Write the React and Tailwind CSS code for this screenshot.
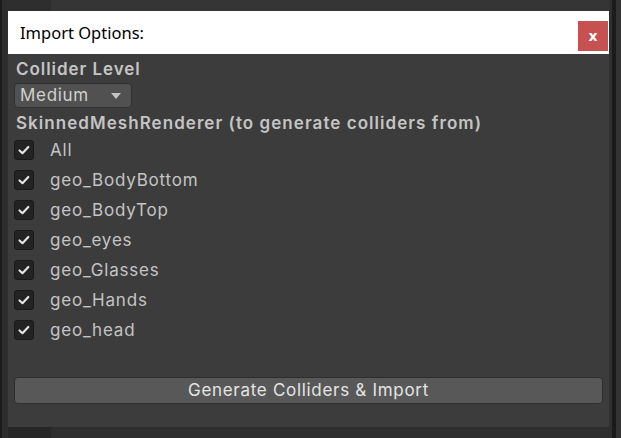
import React from "react";

const items = ["All", "geo_BodyBottom", "geo_BodyTop", "geo_eyes", "geo_Glasses", "geo_Hands", "geo_head"];

function Check() {
  return (
    <div className="w-[20px] h-[20px] rounded-[3px] bg-[#232323] border border-[#1a1a1a] flex items-center justify-center">
      <svg width="20" height="20" viewBox="0 0 20 20" className="block">
        <polyline points="5,10.5 8.3,13.6 14.8,6.6" fill="none" stroke="#e6e6e6" strokeWidth="2.3" strokeLinecap="round" strokeLinejoin="round" />
      </svg>
    </div>
  );
}

export default function App() {
  const inter = { fontFamily: "Inter, 'Noto Sans', sans-serif" };
  return (
    <div className="w-[621px] h-[438px] flex bg-[#2b2b2b] overflow-hidden" style={inter}>
      <div className="w-[8px] h-full flex">
        <div className="w-[2px] h-full bg-[#1b1b1b]" />
        <div className="w-[6px] h-full bg-[#2d2d2d]" />
      </div>
      <div className="w-[601px] h-full flex flex-col">
        <div className="h-[11px] flex">
          <div className="w-[43px] bg-[#2e2e2e]" />
          <div className="flex-1 bg-[#353535]" />
        </div>
        <div className="h-[416px] flex flex-col bg-[#3c3c3c]">
          <div className="h-[43px] bg-white flex items-start justify-between">
            <div className="pl-[12px] pt-[1px] h-full flex items-center text-[16.5px] text-black" style={{ fontFamily: "'Noto Sans', sans-serif" }}>
              Import Options:
            </div>
            <div className="mt-[10px] mr-[1px] w-[30px] h-[30px] bg-[#c75050] flex items-center justify-center text-white font-bold text-[14px] leading-none" style={{ fontFamily: "'DejaVu Sans', sans-serif" }}>
              x
            </div>
          </div>
          <div className="flex-1 flex flex-col pl-[6px] pr-[6px] pt-[4px]">
            <div className="h-[22px] flex items-center pl-[2px] text-[17px] font-semibold tracking-[0.95px] text-[#c4c4c4] leading-[22px]">
              Collider Level
            </div>
            <div className="mt-[3px] w-[118px] h-[25px] rounded-[4px] bg-[#515151] border border-[#2f2f2f] flex items-center justify-between pl-[5px] pr-[10px]">
              <span className="text-[17px] text-[#d0d0d0] tracking-[0.7px] leading-none">Medium</span>
              <svg width="10" height="6" viewBox="0 0 10 6" className="block">
                <polygon points="0,0 10,0 5,6" fill="#c4c4c4" />
              </svg>
            </div>
            <div className="mt-[4px] h-[22px] flex items-center pl-[2px] text-[17px] font-semibold tracking-[1.05px] text-[#c4c4c4] leading-[22px] whitespace-nowrap">
              SkinnedMeshRenderer (to generate colliders from)
            </div>
            <div className="mt-[1px] flex flex-col">
              {items.map((it) => (
                <div key={it} className="h-[30px] flex items-center">
                  <Check />
                  <span className="ml-[16px] text-[17px] text-[#c4c4c4] tracking-[0.8px] leading-none">{it}</span>
                </div>
              ))}
            </div>
            <div className="mt-[32px] h-[27px] rounded-[4px] bg-[#585858] border border-[#2f2f2f] flex items-center justify-center text-[17px] tracking-[0.7px] text-[#e4e4e4]">
              Generate Colliders &amp; Import
            </div>
          </div>
        </div>
        <div className="flex-1 flex">
          <div className="w-[43px] bg-[#272727]" />
          <div className="flex-1 bg-[#2e2e2e]" />
        </div>
      </div>
      <div className="flex-1 h-full flex">
        <div className="w-[3px] h-full bg-[#2f2f2f]" />
        <div className="w-[4px] h-full bg-[#1b1b1b]" />
        <div className="flex-1 h-full bg-[#333333]" />
      </div>
    </div>
  );
}
